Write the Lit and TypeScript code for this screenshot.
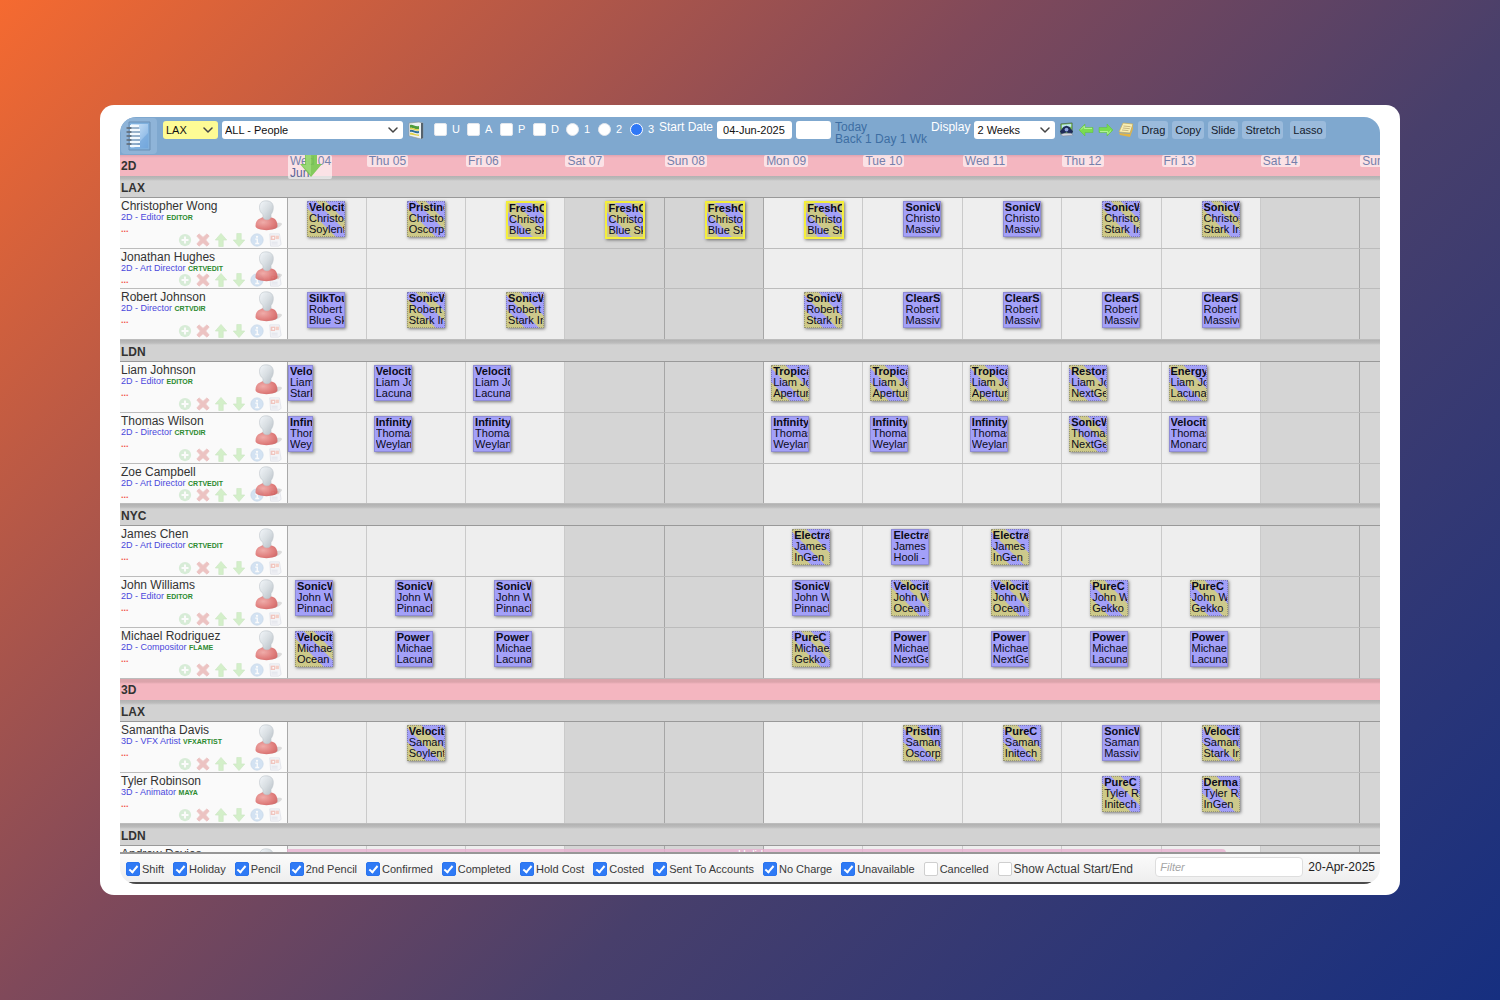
import { LitElement, html, css, svg, nothing, TemplateResult } from "lit";
import { customElement, property } from "lit/decorators.js";
import { classMap } from "lit/directives/class-map.js";

type Look = "solid" | "split" | "band" | "picked";

interface Booking {
  day: number;
  title: string;
  client: string;
  look: Look;
}

interface Person {
  name: string;
  role: string;
  code: string;
  short?: boolean;
  away?: boolean;
  bookings: Booking[];
}

interface Studio {
  name: string;
  shift: "west" | "east" | "europe";
  people: Person[];
}

interface Department {
  name: string;
  studios: Studio[];
}

const DAYS = ["Wed 04", "Thu 05", "Fri 06", "Sat 07", "Sun 08", "Mon 09", "Tue 10", "Wed 11", "Thu 12", "Fri 13", "Sat 14", "Sun 15"];
const isWeekend = (i: number) => [3, 4, 10, 11].includes(i);

const b = (day: number, title: string, client: string, look: Look = "solid"): Booking => ({ day, title, client, look });

const DEPARTMENTS: Department[] = [
  {
    name: "2D",
    studios: [
      {
        name: "LAX",
        shift: "west",
        people: [
          {
            name: "Christopher Wong", role: "2D - Editor", code: "EDITOR",
            bookings: [
              b(0, "Velocity", "Soylent", "split"),
              b(1, "Pristine", "Oscorp", "split"),
              b(2, "FreshCo", "Blue Sky", "picked"),
              b(3, "FreshCo", "Blue Sky", "picked"),
              b(4, "FreshCo", "Blue Sky", "picked"),
              b(5, "FreshCo", "Blue Sky", "picked"),
              b(6, "SonicWave", "Massive"),
              b(7, "SonicWave", "Massive"),
              b(8, "SonicWave", "Stark Ind", "split"),
              b(9, "SonicWave", "Stark Ind", "split"),
            ],
          },
          { name: "Jonathan Hughes", role: "2D - Art Director", code: "CRTVEDIT", short: true, bookings: [] },
          {
            name: "Robert Johnson", role: "2D - Director", code: "CRTVDIR",
            bookings: [
              b(0, "SilkTouch", "Blue Sky"),
              b(1, "SonicWave", "Stark Ind", "split"),
              b(2, "SonicWave", "Stark Ind", "band"),
              b(5, "SonicWave", "Stark Ind", "band"),
              b(6, "ClearSky", "Massive"),
              b(7, "ClearSky", "Massive"),
              b(8, "ClearSky", "Massive"),
              b(9, "ClearSky", "Massive"),
            ],
          },
        ],
      },
      {
        name: "LDN",
        shift: "europe",
        people: [
          {
            name: "Liam Johnson", role: "2D - Editor", code: "EDITOR",
            bookings: [
              b(0, "Velocity", "Stark"),
              b(1, "Velocity", "Lacuna"),
              b(2, "Velocity", "Lacuna"),
              b(5, "Tropical", "Aperture", "band"),
              b(6, "Tropical", "Aperture", "band"),
              b(7, "Tropical", "Aperture", "band"),
              b(8, "Restore", "NextGen", "band"),
              b(9, "Energy", "Lacuna", "band"),
            ],
          },
          {
            name: "Thomas Wilson", role: "2D - Director", code: "CRTVDIR",
            bookings: [
              b(0, "Infinity", "Weyland"),
              b(1, "Infinity", "Weyland"),
              b(2, "Infinity", "Weyland"),
              b(5, "Infinity", "Weyland"),
              b(6, "Infinity", "Weyland"),
              b(7, "Infinity", "Weyland"),
              b(8, "SonicWave", "NextGen", "split"),
              b(9, "Velocity", "Monarch"),
            ],
          },
          { name: "Zoe Campbell", role: "2D - Art Director", code: "CRTVEDIT", short: true, bookings: [] },
        ],
      },
      {
        name: "NYC",
        shift: "east",
        people: [
          {
            name: "James Chen", role: "2D - Art Director", code: "CRTVEDIT",
            bookings: [
              b(5, "Electra", "InGen", "band"),
              b(6, "Electra", "Hooli -"),
              b(7, "Electra", "InGen", "band"),
            ],
          },
          {
            name: "John Williams", role: "2D - Editor", code: "EDITOR",
            bookings: [
              b(0, "SonicWave", "Pinnacle"),
              b(1, "SonicWave", "Pinnacle"),
              b(2, "SonicWave", "Pinnacle"),
              b(5, "SonicWave", "Pinnacle"),
              b(6, "Velocity", "Ocean", "split"),
              b(7, "Velocity", "Ocean", "split"),
              b(8, "PureC", "Gekko", "band"),
              b(9, "PureC", "Gekko", "band"),
            ],
          },
          {
            name: "Michael Rodriguez", role: "2D - Compositor", code: "FLAME",
            bookings: [
              b(0, "Velocity", "Ocean", "split"),
              b(1, "Power", "Lacuna"),
              b(2, "Power", "Lacuna"),
              b(5, "PureC", "Gekko", "split"),
              b(6, "Power", "NextGen"),
              b(7, "Power", "NextGen"),
              b(8, "Power", "Lacuna"),
              b(9, "Power", "Lacuna"),
            ],
          },
        ],
      },
    ],
  },
  {
    name: "3D",
    studios: [
      {
        name: "LAX",
        shift: "west",
        people: [
          {
            name: "Samantha Davis", role: "3D - VFX Artist", code: "VFXARTIST",
            bookings: [
              b(1, "Velocity", "Soylent", "band"),
              b(6, "Pristine", "Oscorp", "band"),
              b(7, "PureC", "Initech", "band"),
              b(8, "SonicWave", "Massive"),
              b(9, "Velocity", "Stark Ind", "band"),
            ],
          },
          {
            name: "Tyler Robinson", role: "3D - Animator", code: "MAYA",
            bookings: [b(8, "PureC", "Initech", "split"), b(9, "Derma", "InGen", "band")],
          },
        ],
      },
      {
        name: "LDN",
        shift: "europe",
        people: [{ name: "Andrew Davies", role: "3D - Animator", code: "MAYA", away: true, bookings: [] }],
      },
    ],
  },
];

const STATUSES: [string, boolean][] = [
  ["Shift", true], ["Holiday", true], ["Pencil", true], ["2nd Pencil", true], ["Confirmed", true],
  ["Completed", true], ["Hold Cost", true], ["Costed", true], ["Sent To Accounts", true],
  ["No Charge", true], ["Unavailable", true], ["Cancelled", false],
];

const tallArrow = (turn: number) => svg`
  <g transform="rotate(${turn} 8 8)">
    <path d="M5.500 15.500V8H1.500L8 .5l6.500 7.500h-4v7.500z" fill="#6fd24a" stroke="#58b83a" stroke-width=".8" stroke-linejoin="round"/>
  </g>`;

const wideArrow = (turn: number) => svg`
  <g transform="rotate(${turn} 8 8)">
    <path d="M1 8l6-6v3.500h8v5H7V14z" fill="#79dc50" stroke="#5fc03c" stroke-width=".5" stroke-linejoin="round"/>
    <path d="M3 7.500L6.300 4.200v2.200H14" fill="none" stroke="#c0f5a5" stroke-width=".9"/>
  </g>`;

const chevron = html`<svg class="chevron" viewBox="0 0 10 6" width="10" height="6" aria-hidden="true">
  <path d="M1 1l4 4 4-4" fill="none" stroke="#444" stroke-width="1.5" stroke-linecap="round" stroke-linejoin="round"/></svg>`;

const actions: [string, TemplateResult][] = [
  ["Add", svg`<circle cx="8" cy="8" r="7" fill="#7cc77a"/><path d="M8 4v8M4 8h8" stroke="#fff" stroke-width="2.4"/>`],
  ["Remove", svg`<path d="M1 3.500L3.500 1 8 5l4.500-4L15 3.500 11 8l4 4.500L12.500 15 8 11l-4.500 4L1 12.500 5 8z" fill="#c83230" stroke="#c83230"/>`],
  ["Move up", tallArrow(0)],
  ["Move down", tallArrow(180)],
  ["Details", svg`<circle cx="8" cy="8" r="7" fill="#6ea5dd" stroke="#4b86c4"/><circle cx="8" cy="4.300" r="1.300" fill="#fff"/><path d="M6 7h2.300v5M6 12h4.500" fill="none" stroke="#fff" stroke-width="1.600"/>`],
  ["Document", svg`<path d="M2 1h11l2 12-3 2H3z" fill="#e2e6f2" stroke="#9aa2bc" stroke-width=".9"/><path d="M3 3h5v5H3z" fill="#d83a24"/><path d="M5 4.500h2v2H5z" fill="#fff"/><path d="M8.500 3h4v4h-4z" fill="#e8603c"/><path d="M4 10.500h7M4 12.500h7" stroke="#8e96b4" stroke-width=".9"/>`],
];

@customElement("booking-chip")
class BookingChip extends LitElement {
  @property({ attribute: false }) booking!: Booking;
  @property() person = "";

  static styles = css`
    :host { display: block; }
    .chip {
      box-sizing: border-box;
      width: 38px;
      max-width: 100%;
      height: 36px;
      padding: 0 0 0 1px;
      white-space: nowrap;
      font-size: 11px;
      line-height: 11px;
      color: #0b0b18;
      border: 1px solid #8e8bd6;
      background: #a3a0f8;
      box-shadow: 1px 1px 3px rgba(0, 0, 0, 0.5);
    }
    .chip > div { overflow: hidden; }
    .split, .band { border: 1px dotted rgba(70, 70, 90, 0.4); background-clip: border-box; background-origin: border-box; }
    .split { background-image: linear-gradient(45deg, #cdc988 0 20px, #a3a0f8 21px 31px, #cdc98c 32px 38px, #a3a0f8 39px); }
    .band { background-image: linear-gradient(45deg, #cdc988 0 13px, #a3a0f8 14px 23px, #cdc98c 24px 35px, #a3a0f8 36px); }
    .picked {
      width: 40px;
      height: 38px;
      border: 2px solid #f4ee3c;
      background: linear-gradient(45deg, #cdc988 0 8px, #a3a0f8 9px 17px, #cdc988 18px 29px, #a3a0f8 30px 40px, #cdc988 41px);
    }
    .title { font-weight: bold; }
  `;

  render() {
    const k = this.booking;
    return html`<div class="chip ${k.look}">
      <div class="title">${k.title}</div>
      <div>${this.person}</div>
      <div>${k.client}</div>
    </div>`;
  }
}

@customElement("person-row")
class PersonRow extends LitElement {
  @property({ attribute: false }) person!: Person;
  @property() shift = "west";

  static styles = css`
    :host { display: block; flex: none; }
    .row {
      display: grid;
      grid-template-columns: 167px minmax(0, 1fr);
      box-sizing: border-box;
      height: 51px;
      border-bottom: 1px solid #bcbcbc;
    }
    .row.short { height: 40px; }
    .who {
      display: grid;
      background: #fafafa;
      min-height: 0;
    }
    .who > * { grid-area: 1 / 1; }
    .text { padding: 2px 0 0 1px; white-space: nowrap; }
    .name { font-size: 12px; line-height: 12px; color: #333; }
    .role { font-size: 9px; line-height: 10px; color: #4a48dc; }
    .code { font-size: 7px; font-weight: bold; color: #2c8a30; }
    .more { font-size: 9px; line-height: 12px; font-weight: bold; color: #f25048; }
    .avatar { justify-self: end; align-self: start; margin: 2px 5px 0 0; z-index: 1; opacity: 0.85; }
    .actions { display: flex; gap: 4px; justify-self: end; align-self: end; padding: 0 5px 1px 0; opacity: 0.27; }
    .actions button { border: 0; background: none; padding: 0; width: 14px; height: 14px; }
    .actions svg { display: block; }
    .days { display: grid; grid-template-columns: minmax(0, 394fr) repeat(10, minmax(0, 497fr)) minmax(0, 104fr); min-width: 0; }
    .day {
      grid-row: 1;
      box-sizing: border-box;
      min-width: 0;
      background: #eee;
      border-left: 1px solid #cacaca;
      padding: 3px 0 0 40px;
    }
    .day:nth-child(1) { grid-column: 1; border-left-color: #a9a9a9; }
    .day:nth-child(2) { grid-column: 2; }
    .day:nth-child(3) { grid-column: 3; }
    .day:nth-child(4) { grid-column: 4; }
    .day:nth-child(5) { grid-column: 5; }
    .day:nth-child(6) { grid-column: 6; }
    .day:nth-child(7) { grid-column: 7; }
    .day:nth-child(8) { grid-column: 8; }
    .day:nth-child(9) { grid-column: 9; }
    .day:nth-child(10) { grid-column: 10; }
    .day:nth-child(11) { grid-column: 11; }
    .day:nth-child(12) { grid-column: 12; }
    .weekend { background: #d5d5d5; }
    .day.weekend + .day { border-left-color: #a6a6a6; }
    .europe .day { padding-left: 7px; }
    .east .day { padding-left: 28px; }
    .west .day.first { padding-left: 19px; }
    .east .day.first { padding-left: 7px; }
    .europe .day.first { padding: 3px 53px 0 0; }
    .away {
      grid-row: 1;
      grid-column: 1 / 11;
      margin: 3px 34px 20px 0;
      border-radius: 0 4px 4px 0;
      background: rgba(231, 176, 208, 0.8);
      color: #fff;
      font-size: 11px;
      line-height: 11px;
      text-align: center;
      overflow: hidden;
      z-index: 1;
    }
  `;

  render() {
    const p = this.person;
    return html`<div class=${classMap({ row: true, short: !!p.short, [this.shift]: true })}>
      <div class="who">
        <div class="text">
          <div class="name">${p.name}</div>
          <div class="role">${p.role} <span class="code">${p.code}</span></div>
          <div class="more">...</div>
        </div>
        <div class="actions">
          ${actions.map(([label, art]) => html`<button aria-label="${label} ${p.name}"><svg viewBox="0 0 16 16" width="14" height="14">${art}</svg></button>`)}
        </div>
        <svg class="avatar" viewBox="0 0 28 32" width="28" height="32" aria-hidden="true">
          <defs>
            <linearGradient id="head" x1="0" y1="0" x2="1" y2="1"><stop offset="0" stop-color="#f1f6fa"/><stop offset=".5" stop-color="#d3dadf"/><stop offset="1" stop-color="#a8b2ba"/></linearGradient>
            <radialGradient id="body" cx=".35" cy=".4" r=".8"><stop offset="0" stop-color="#ee9f9c"/><stop offset=".6" stop-color="#dc6a68"/><stop offset="1" stop-color="#c44a4a"/></radialGradient>
          </defs>
          <path d="M20 24c4-2 8-1 8 0s-3 4-8 5z" fill="#aaa" opacity=".45"/>
          <path d="M1.500 26c0-4 1.500-6.500 4.500-7.500l3-1.500h7l3 1c3 1 4.500 4 4.500 8 0 5.500-22 5.500-22 0z" fill="url(#body)"/>
          <path d="M12 .8c5 0 7.300 2.700 7.300 6.700 0 3.500-1.300 5.500-2.300 7v2.500c-1 3.500-6.500 3.500-8 .5v-3C7 13 5.500 11 5.500 7.500 5.500 3.500 7.500.8 12 .8z" fill="url(#head)" stroke="#b3bcc3" stroke-width=".6"/>
        </svg>
      </div>
      <div class="days">
        ${DAYS.map((_, i) => {
          const k = p.bookings.find((x) => x.day === i);
          return html`<div class=${classMap({ day: true, first: i === 0, weekend: isWeekend(i) })}>
            ${k ? html`<booking-chip .booking=${k} .person=${p.name}></booking-chip>` : nothing}
          </div>`;
        })}
        ${p.away ? html`<div class="away">Holiday</div>` : nothing}
      </div>
    </div>`;
  }
}

@customElement("app-root")
class AppRoot extends LitElement {
  static styles = css`
    :host {
      display: flex;
      box-sizing: border-box;
      height: 100vh;
      padding: 105px 100px;
      font-family: "Liberation Sans", Arial, sans-serif;
      background: linear-gradient(135deg, #f56a30 0%, #80495a 40%, #483f6b 62%, #162f80 100%);
    }
    .frame {
      flex: 1;
      min-width: 0;
      display: flex;
      box-sizing: border-box;
      padding: 12px 20px 11px;
      background: #fff;
      border-radius: 14px;
    }
    .app {
      flex: 1;
      min-width: 0;
      display: flex;
      flex-direction: column;
      overflow: hidden;
      border-radius: 16px;
    }
    button, input, select { font-family: inherit; }

    .toolbar {
      flex: none;
      display: flex;
      align-items: flex-start;
      box-sizing: border-box;
      height: 38px;
      padding: 4px 0 0 1px;
      gap: 4px;
      overflow: hidden;
      white-space: nowrap;
      background: #7fa8cf;
      font-size: 11px;
      line-height: 18px;
      color: #fff;
    }
    .menu {
      display: flex;
      align-items: center;
      justify-content: center;
      width: 36px;
      height: 36px;
      margin: -3px 2px 0 0;
      padding: 0;
      border: 0;
      border-radius: 4px;
      background: #8fb4d8;
    }
    .pick { display: grid; align-items: center; }
    .pick > * { grid-area: 1 / 1; }
    .pick select {
      appearance: none;
      width: 100%;
      height: 18px;
      border: 0;
      border-radius: 3px;
      padding: 0 3px;
      background: #fff;
      font-size: 11px;
      color: #111;
    }
    .pick .chevron { justify-self: end; margin-right: 5px; pointer-events: none; }
    .site { width: 55px; }
    .site select { background: #fdfb95; }
    .team { width: 181px; }
    .span { width: 81px; }
    .iconbtn { display: flex; align-items: center; border: 0; background: none; padding: 0; height: 17px; }
    .flags { display: flex; padding-left: 5px; }
    .flags label { display: flex; align-items: center; gap: 5px; width: 33px; height: 16px; }
    .flags label.round { width: 32px; }
    .flags label.last { width: 25px; }
    .flags input { appearance: none; flex: none; box-sizing: border-box; width: 13px; height: 13px; margin: 0; background: #fff; border: 1px solid #e2e6ec; border-radius: 2px; }
    .flags input[type="radio"] { border-radius: 50%; }
    .flags input[type="radio"]:checked { border: 1px solid #fff; background: #2f78f6; }
    .caption { font-size: 12px; line-height: 12px; }
    .field { box-sizing: border-box; height: 18px; border: 0; border-radius: 3px; padding: 0 6px; font-size: 11px; color: #111; background: #fff; }
    .start { width: 75px; }
    .blank { width: 35px; }
    .jump { font-size: 12px; line-height: 12px; color: #3d6ea3; }
    .jump a { color: inherit; text-decoration: none; }
    .tools { display: flex; gap: 4px; }
    .tool { height: 18px; padding: 0 3px; border: 0; border-radius: 3px; background: #9bbbdc; font-size: 11px; color: #14202c; }
    .tool.apart { margin-left: 3px; }
    .icons { display: flex; gap: 4px; }

    .schedule { flex: 1; min-height: 0; display: flex; flex-direction: column; overflow: hidden; }
    .bar {
      flex: none;
      display: grid;
      grid-template-columns: 167px minmax(0, 1fr);
      box-sizing: border-box;
      font-size: 12px;
      font-weight: bold;
      line-height: 22px;
      color: #333;
    }
    .bar span { padding-left: 1px; }
    .dept { height: 21px; background: linear-gradient(#dba4ab 0 3px, #f4b6c0 5px); }
    .dept.top { background: linear-gradient(#e0a3b0, #f4b6c0 3px); }
    .studio { height: 22px; border-bottom: 1px solid #999; background: linear-gradient(#b2b2b2 0, #bcbcbc 3px, #d2d2d2 5px); line-height: 24px; }
    .dates { display: grid; grid-template-columns: minmax(0, 394fr) repeat(10, minmax(0, 497fr)) minmax(0, 104fr); min-width: 0; height: 21px; z-index: 1; }
    .date { position: relative; min-width: 0; padding-left: 1px; line-height: 12px; }
    .date.edge { overflow: hidden; }
    .stamp { display: inline-block; vertical-align: top; box-sizing: border-box; padding: 0 2px; border-radius: 2px; background: rgba(255, 255, 255, 0.6); font-weight: normal; font-size: 12px; line-height: 12px; color: #7580ab; white-space: nowrap; }
    .stamp.now { width: 44px; height: 24px; }
    .stamp b { font-weight: normal; color: #5a6596; }
    .marker { position: absolute; left: 12px; top: -2px; }

    .footer {
      flex: none;
      display: flex;
      align-items: center;
      box-sizing: border-box;
      height: 32px;
      gap: 9px;
      padding: 2px 5px 0 6px;
      overflow: hidden;
      border-top: 2px solid #979797;
      border-bottom: 2px solid #4a4a4a;
      background: linear-gradient(#fbfbfb, #eee);
      font-size: 11px;
      color: #3a3a3a;
      white-space: nowrap;
    }
    .footer label { display: flex; align-items: center; gap: 2px; }
    .footer .wide { font-size: 12px; }
    .footer input[type="checkbox"] {
      appearance: none;
      display: grid;
      place-items: center;
      box-sizing: border-box;
      width: 14px;
      height: 14px;
      margin: 0;
      border: 1px solid #cfcfcf;
      border-radius: 2px;
      background: #fff;
    }
    .footer input[type="checkbox"]:checked { border-color: #2a74ee; background: #2f7af5; }
    .footer input[type="checkbox"]:checked::after {
      content: "";
      width: 3px;
      height: 7px;
      margin-top: -2px;
      border: solid #fff;
      border-width: 0 2px 2px 0;
      transform: rotate(40deg);
    }
    .find { display: flex; align-items: center; gap: 5px; margin-left: auto; padding-bottom: 4px; }
    .filter { box-sizing: border-box; width: 148px; height: 20px; margin: 0; padding: 0 4px; border: 1px solid #dedede; border-radius: 4px; background: #fff; font-size: 11px; }
    .filter::placeholder { color: #a5a5a5; font-style: italic; }
    .until { font-size: 12px; color: #222; }
  `;

  private flag(text: string, kind: "checkbox" | "radio", checked = false, last = false) {
    return html`<label class=${classMap({ round: kind === "radio", last })}>
      <input type=${kind} name=${kind === "radio" ? "level" : `flag-${text}`} .checked=${checked} />${text}
    </label>`;
  }

  private toolbar() {
    return html`<header class="toolbar">
      <button class="menu" aria-label="Menu">
        <svg viewBox="0 0 26 30" width="26" height="30">
          <defs><linearGradient id="sheet" x1="0" y1="0" x2="1" y2="1"><stop offset="0" stop-color="#d4e8fa"/><stop offset="1" stop-color="#78abe0"/></linearGradient></defs>
          <path d="M3 1h21v28H3z" fill="#7fb0de" stroke="#6c8fb4"/>
          <path d="M5 3h17v24H5z" fill="url(#sheet)"/>
          <path d="M8 27L22 12v15z" fill="#6ea4da" opacity=".6"/>
          <path d="M4 5h9M4 9h10M4 13h10M4 17h10M4 21h10M4 25h10" stroke="#f4f9fe" stroke-width="2"/>
          <path d="M3 7h10M3 11h11M3 15h11M3 19h11M3 23h11" stroke="#7c90a6" stroke-width="1"/>
          <path d="M1 7h4M1 11h4M1 15h4M1 19h4M1 23h4" stroke="#5d666f" stroke-width="1.300" stroke-linecap="round"/>
        </svg>
      </button>
      <div class="pick site"><select aria-label="Site"><option>LAX</option></select>${chevron}</div>
      <div class="pick team"><select aria-label="Team"><option>ALL - People</option></select>${chevron}</div>
      <button class="iconbtn" aria-label="Views">
        <svg viewBox="0 0 18 18" width="18" height="18">
          <path d="M2 2l10-1 4 1v15l-2 1-12-3z" fill="#eef2f2" stroke="#8b979e" stroke-width=".7"/>
          <path d="M14 2h2v15l-2 1z" fill="#56626c"/>
          <path d="M3 4c3-1 5 2 9 1v3c-4 1-6-2-9-1z" fill="#4f9c3c"/>
          <path d="M3 9c3-1 5 2 9 1v2c-4 1-6-2-9-1z" fill="#2f6f9a"/>
          <path d="M3 7c3-1 5 2 9 1v1.500c-4 1-6-2-9-1zM3 12c3-1 5 2 9 1.500V15l-9-1.500z" fill="#e0d24a"/>
        </svg>
      </button>
      <div class="flags">
        ${["U", "A", "P", "D"].map((t) => this.flag(t, "checkbox"))}
        ${this.flag("1", "radio")}${this.flag("2", "radio")}${this.flag("3", "radio", true, true)}
      </div>
      <label class="caption" for="start">Start Date</label>
      <input class="field start" id="start" .value=${"04-Jun-2025"} />
      <input class="field blank" aria-label="Start time" />
      <nav class="jump">
        <div><a href="#today">Today</a></div>
        <div><a href="#back">Back</a> <a href="#day">1 Day</a> <a href="#week">1 Wk</a></div>
      </nav>
      <label class="caption" for="span">Display</label>
      <div class="pick span"><select id="span"><option>2 Weeks</option></select>${chevron}</div>
      <div class="icons">
        <button class="iconbtn" aria-label="Find">
          <svg viewBox="0 0 16 16" width="15" height="15">
            <path d="M2 2l12-1v11l-12 1z" fill="#7cc850" stroke="#4b6a4a" stroke-width=".8"/>
            <path d="M3 3l10-1v3L3 6z" fill="#bde6f2"/>
            <path d="M1 10l4-5 3-1 3 1 4 5-2 3-3-1-2-1-2 1-3 1z" fill="#1e2c58"/>
            <circle cx="8" cy="8" r="2" fill="#8fa4e0"/>
            <path d="M2 13l4-1 7 0 2 2-11 1z" fill="#d5d8e2" stroke="#7c8398" stroke-width=".5"/>
          </svg>
        </button>
        <button class="iconbtn" aria-label="Earlier"><svg viewBox="0 0 16 16" width="16" height="16">${wideArrow(0)}</svg></button>
        <button class="iconbtn" aria-label="Later"><svg viewBox="0 0 16 16" width="16" height="16">${wideArrow(180)}</svg></button>
        <button class="iconbtn" aria-label="Notes">
          <svg viewBox="0 0 16 16" width="16" height="16">
            <path d="M5 1l10 1-3 9-11-1z" fill="#f9efb4" stroke="#c5ab58" stroke-width=".7"/>
            <path d="M1 11l11 1 3-9v4l-3 8-10-2z" fill="#e2b445"/>
            <path d="M5.500 4l7 .7M4.800 6l7 .7M4 8l6.500.7" stroke="#bba875" stroke-width=".8"/>
          </svg>
        </button>
      </div>
      <div class="tools">
        ${["Drag", "Copy", "Slide", "Stretch"].map((t) => html`<button class="tool">${t}</button>`)}
        <button class="tool apart">Lasso</button>
      </div>
    </header>`;
  }

  private dates() {
    return html`<div class="dates">
      ${DAYS.map((d, i) =>
        i === 0
          ? html`<div class="date"><div class="stamp now">${d}<br /><b>Jun</b></div>
              <svg class="marker" viewBox="0 0 24 25" width="24" height="25" aria-hidden="true">
                <path d="M6 1h12v10h5L12 24 1 11h5z" fill="#74c64a" opacity=".88"/>
                <path d="M7 2h5v20L3 12h4z" fill="#a4de82" opacity=".65"/>
              </svg></div>`
          : html`<div class=${classMap({ date: true, edge: i === DAYS.length - 1 })}><div class="stamp">${d}</div></div>`
      )}
    </div>`;
  }

  render() {
    return html`<div class="frame">
      <div class="app">
        ${this.toolbar()}
        <main class="schedule">
          ${DEPARTMENTS.map(
            (dept, i) => html`
              <div class=${classMap({ bar: true, dept: true, top: i === 0 })}><span>${dept.name}</span>${i === 0 ? this.dates() : nothing}</div>
              ${dept.studios.map(
                (s) => html`
                  <div class="bar studio"><span>${s.name}</span></div>
                  ${s.people.map((p) => html`<person-row .person=${p} .shift=${s.shift}></person-row>`)}
                `
              )}
            `
          )}
        </main>
        <footer class="footer">
          ${STATUSES.map(([t, on]) => html`<label><input type="checkbox" .checked=${on} />${t}</label>`)}
          <label class="wide"><input type="checkbox" />Show Actual Start/End</label>
          <div class="find">
            <input class="filter" aria-label="Filter" placeholder="Filter" />
            <span class="until">20-Apr-2025</span>
          </div>
        </footer>
      </div>
    </div>`;
  }
}
